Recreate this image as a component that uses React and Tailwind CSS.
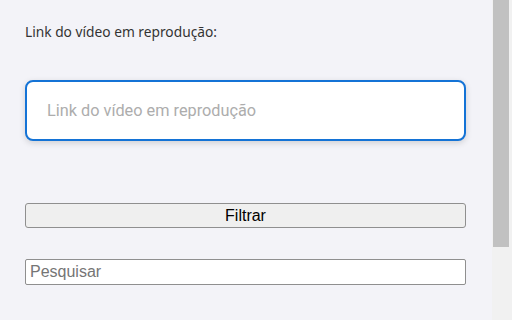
export default function App() {
  return (
    <div className="flex h-[320px] w-[512px] overflow-hidden bg-[#f3f3f8]">
      <div className="flex-1 pl-[25px] pr-[26px] pt-[22px]">
        <label className="block text-[13.75px] leading-[19px] text-[#333] [font-family:'Noto_Sans',sans-serif]">
          Link do vídeo em reprodução:
        </label>

        <input
          type="text"
          placeholder="Link do vídeo em reprodução"
          className="mt-[39px] block h-[61px] w-full rounded-[8px] border-2 border-[#1473d6] bg-white px-[20px] text-[16.3px] text-[#333] shadow-[0_2px_6px_rgba(0,0,0,0.15)] outline-none placeholder:text-[#adadad] [font-family:Roboto,sans-serif]"
        />

        <button className="mt-[62px] block h-[25px] w-full rounded-[3px] border border-[#8f8f8f] bg-[#efefef] text-[16px] leading-none text-black [font-family:'Liberation_Sans',Arial,sans-serif]">
          Filtrar
        </button>

        <input
          type="text"
          placeholder="Pesquisar"
          className="mt-[31px] block h-[26px] w-full rounded-[2px] border border-[#8f8f8f] bg-white px-[4px] text-[16px] outline-none placeholder:text-[#757575] [font-family:'Liberation_Sans',Arial,sans-serif]"
        />
      </div>

      {/* barra de rolagem */}
      <div className="w-[20px] bg-[#f1f1f1] pl-[1px] pr-[3px]">
        <div className="h-[247px] bg-[#c1c1c1]" />
      </div>
    </div>
  );
}
